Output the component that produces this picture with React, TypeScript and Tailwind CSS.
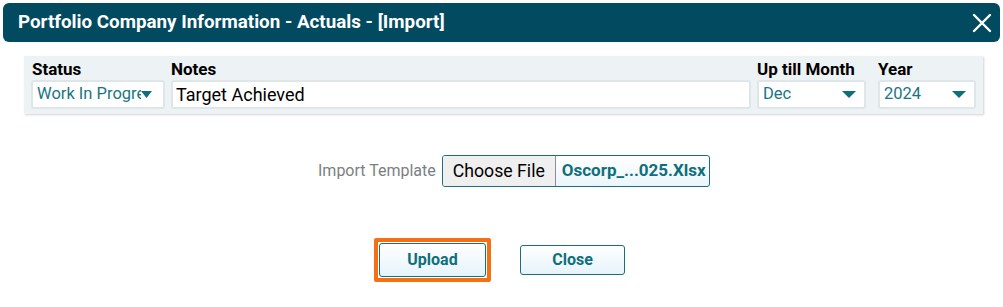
import React from 'react';

const font = { fontFamily: 'Roboto, "Liberation Sans", sans-serif' };

function Caret({ w = 14 }: { w?: number }) {
  return (
    <svg width={w} height="8" viewBox="0 0 14 8" preserveAspectRatio="none" className="shrink-0">
      <path d="M0 0 L14 0 L7 7 Z" fill="#0e6f7b" />
    </svg>
  );
}

function SelectBox({ value, pr, caret }: { value: string; pr: string; caret?: number }) {
  return (
    <div className={`flex h-[29px] items-center rounded-[3px] border-2 border-[#dfe6e9] bg-white pl-[4px] text-[16.5px] text-[#1a7582] ${pr}`}>
      <span className="min-w-0 flex-1 overflow-hidden whitespace-nowrap">{value}</span>
      <Caret w={caret} />
    </div>
  );
}

export default function App() {
  return (
    <div style={font} className="h-[307px] w-[1003px] bg-white">
      <div className="mx-[3px] mt-[3px] flex h-[39px] items-center justify-between rounded-[6px] bg-[#014a60] pl-[15px] pr-[8px]">
        <span className="text-[18.8px] font-bold text-white">Portfolio Company Information - Actuals - [Import]</span>
        <svg width="20" height="20" viewBox="0 0 20 20">
          <path d="M2 2 L18 18 M18 2 L2 18" stroke="white" strokeWidth="2.4" strokeLinecap="round" />
        </svg>
      </div>

      <div className="ml-[24px] mt-[14px] w-[959px] bg-[#edf2f4] px-[7px] pb-[5px] pt-[2px] shadow-[1px_1px_2px_rgba(0,0,0,0.18)]">
        <div className="flex gap-[6px]">
          <div className="w-[134px]">
            <div className="h-[22px] pl-[1px] text-[17px] font-bold leading-[22px] text-black">Status</div>
            <SelectBox value="Work In Progress" pr="pr-[11px]" caret={11} />
          </div>
          <div className="w-[580px]">
            <div className="h-[22px] text-[17px] font-bold leading-[22px] text-black">Notes</div>
            <div className="flex h-[29px] items-center rounded-[3px] border-2 border-[#dfe6e9] bg-white pl-[3px] text-[18px] text-black">
              Target Achieved
            </div>
          </div>
          <div className="w-[109px]">
            <div className="h-[22px] whitespace-nowrap text-[17px] font-bold leading-[22px] text-black">Up till Month</div>
            <SelectBox value="Dec" pr="pr-[8px]" />
          </div>
          <div className="ml-[6px] w-[98px]">
            <div className="h-[22px] text-[17px] font-bold leading-[22px] text-black">Year</div>
            <SelectBox value="2024" pr="pr-[8px]" />
          </div>
        </div>
      </div>

      <div className="mt-[41px] flex items-center pl-[318px]">
        <span className="text-[16px] text-[#7b7f82]">Import Template</span>
        <div className="ml-[6px] flex h-[32px] w-[268px] items-center overflow-hidden rounded-[3px] border border-[#1c6e78] bg-[linear-gradient(#ffffff,#eaf5fb)]">
          <div className="flex h-full w-[113px] shrink-0 items-center justify-center border-r border-[#8f8f8f] bg-[#efefef] text-[17.7px] text-black">
            Choose File
          </div>
          <span className="whitespace-nowrap pl-[6px] text-[17px] font-bold text-[#0e6f7b]">Oscorp_...025.Xlsx</span>
        </div>
      </div>

      <div className="mt-[51px] flex items-center pl-[374px]">
        <div className="rounded-[2px] border-[4px] border-[#f56f13] p-[1px]">
          <button className="h-[34px] w-[107px] rounded-[3px] border border-[#1c6e78] bg-[linear-gradient(#ffffff,#e6f3fb)] text-[16px] font-bold text-[#0e6f7b]">
            Upload
          </button>
        </div>
        <button className="ml-[29px] h-[30px] w-[105px] rounded-[3px] border border-[#1c6e78] bg-[linear-gradient(#ffffff,#e6f3fb)] text-[16px] font-bold text-[#0e6f7b]">
          Close
        </button>
      </div>
    </div>
  );
}
